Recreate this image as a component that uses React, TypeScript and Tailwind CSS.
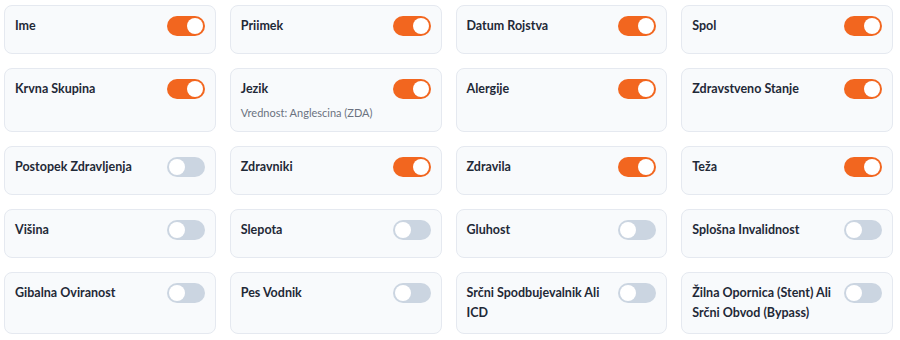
import React, { useState } from 'react';

type Field = {
  label: string;
  on: boolean;
  value?: string;
};

const FIELDS: Field[] = [
  { label: 'Ime', on: true },
  { label: 'Priimek', on: true },
  { label: 'Datum Rojstva', on: true },
  { label: 'Spol', on: true },
  { label: 'Krvna Skupina', on: true },
  { label: 'Jezik', on: true, value: 'Anglescina (ZDA)' },
  { label: 'Alergije', on: true },
  { label: 'Zdravstveno Stanje', on: true },
  { label: 'Postopek Zdravljenja', on: false },
  { label: 'Zdravniki', on: true },
  { label: 'Zdravila', on: true },
  { label: 'Teža', on: true },
  { label: 'Višina', on: false },
  { label: 'Slepota', on: false },
  { label: 'Gluhost', on: false },
  { label: 'Splošna Invalidnost', on: false },
  { label: 'Gibalna Oviranost', on: false },
  { label: 'Pes Vodnik', on: false },
  { label: 'Srčni Spodbujevalnik Ali ICD', on: false },
  { label: 'Žilna Opornica (Stent) Ali Srčni Obvod (Bypass)', on: false },
];

function Toggle({ on, onChange }: { on: boolean; onChange: () => void }) {
  return (
    <button
      type="button"
      onClick={onChange}
      className={`relative shrink-0 w-[38px] h-5 rounded-full transition-colors ${
        on ? 'bg-[#f2661f]' : 'bg-[#cbd5e1]'
      }`}
    >
      <span
        className={`absolute top-[2px] w-4 h-4 rounded-full bg-white transition-all ${
          on ? 'left-[20px]' : 'left-[2px]'
        }`}
      />
    </button>
  );
}

export default function App() {
  const [fields, setFields] = useState(FIELDS);

  const toggle = (i: number) =>
    setFields((prev) => prev.map((f, j) => (j === i ? { ...f, on: !f.on } : f)));

  return (
    <div
      className="w-[900px] h-[340px] bg-white pl-1 pr-[7px] pt-[5px] grid grid-cols-4 gap-3.5 content-start"
      style={{ fontFamily: 'Lato, "Open Sans", sans-serif' }}
    >
      {fields.map((f, i) => (
        <div
          key={f.label}
          className="rounded-lg border border-[#e5e9f0] bg-[#f8fafc] p-2.5 flex items-start justify-between gap-2"
        >
          <div className="min-h-[27px]">
            <p className="text-[12.5px] leading-5 font-bold text-[#1f2937]">{f.label}</p>
            {f.value ? (
              <p className="mt-1.5 text-[11px] leading-4 text-[#6b7280]">Vrednost: {f.value}</p>
            ) : null}
          </div>
          <Toggle on={f.on} onChange={() => toggle(i)} />
        </div>
      ))}
    </div>
  );
}
